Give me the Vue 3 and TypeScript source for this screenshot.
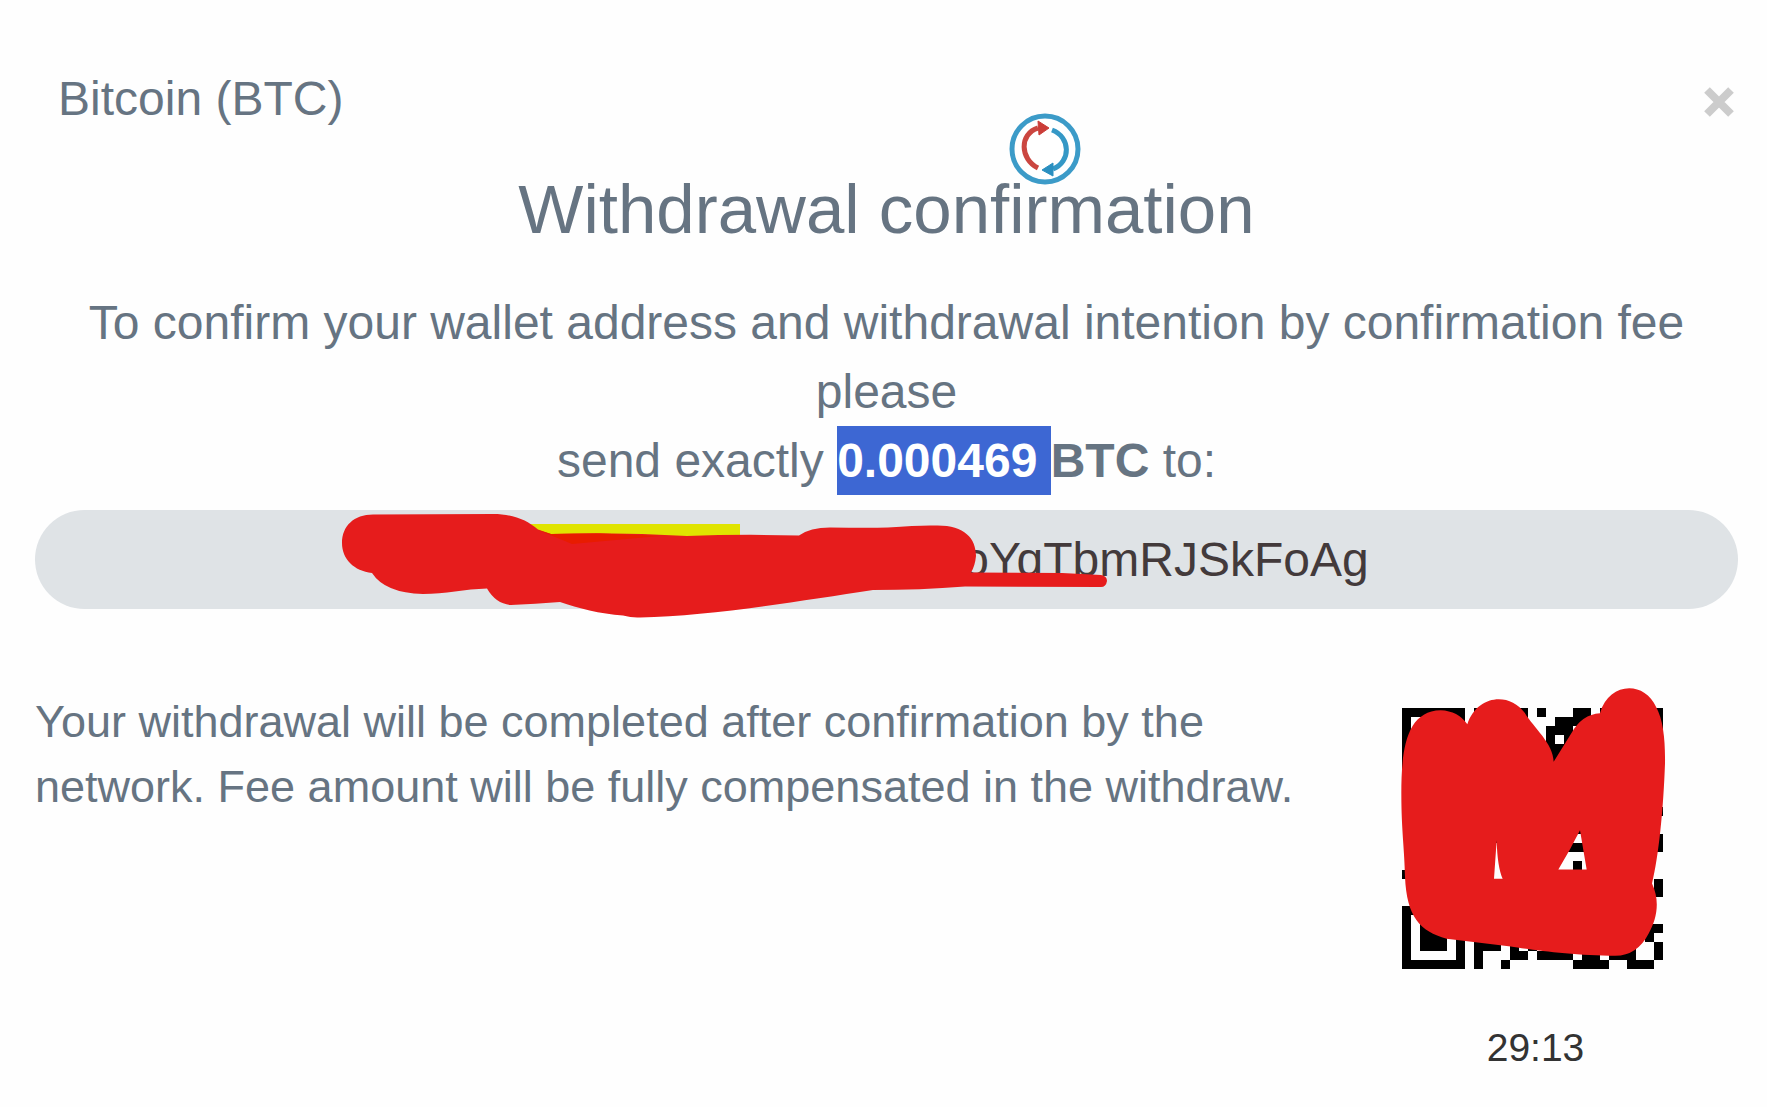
<script setup lang="ts">
const coin = 'Bitcoin (BTC)'
const amount = '0.000469 '
const address = 'oYqTbmRJSkFoAg'
const timeLeft = '29:13'

// Dark modules of the 29x29 code: [column, row, width, height]
const modules: number[][] = [
  [0, 0, 7, 1], [0, 1, 1, 6], [6, 1, 1, 6], [0, 6, 7, 1], [2, 2, 3, 3],
  [8, 0, 6, 3], [15, 0, 1, 1], [19, 0, 2, 1], [17, 1, 4, 1], [16, 2, 3, 1],
  [16, 3, 1, 1], [18, 3, 3, 1], [15, 4, 5, 2],
  [22, 0, 7, 1], [28, 1, 1, 6],
  [28, 11, 1, 1], [28, 14, 1, 2], [10, 14, 1, 1],
  [19, 13, 1, 1], [18, 15, 3, 1], [19, 17, 1, 1], [0, 18, 1, 1], [28, 19, 1, 2],
  [0, 22, 7, 1], [0, 23, 1, 5], [6, 23, 1, 5], [0, 28, 7, 1], [2, 24, 3, 3],
  [8, 26, 3, 1], [8, 27, 1, 2], [11, 28, 1, 1], [12, 26, 1, 2], [13, 27, 1, 1],
  [14, 26, 1, 1], [15, 27, 4, 1], [20, 27, 2, 1], [19, 28, 4, 1], [23, 27, 3, 1],
  [25, 26, 1, 1], [25, 28, 3, 1], [28, 26, 1, 2], [27, 24, 2, 1], [27, 25, 1, 1],
]
</script>

<template>
  <main class="dialog">
    <header class="top">
      <span class="coin">{{ coin }}</span>
      <button class="close" type="button" aria-label="Close">
        <svg viewBox="0 0 30 30" width="30" height="30"><path d="M3 3 27 27M27 3 3 27" stroke="#ccc" stroke-width="8" /></svg>
      </button>
    </header>

    <div class="title-row">
      <h1>Withdrawal confirmation</h1>
      <svg class="refresh" viewBox="0 0 72 72" width="72" height="72" aria-hidden="true">
        <circle cx="36" cy="36" r="33" fill="#fff" stroke="#3c9bc8" stroke-width="5" />
        <path d="M29 55C11 46 10 21 29 15" fill="none" stroke="#cb4640" stroke-width="5" />
        <path d="M29 8 40 15 30 22Z" fill="#cb3d38" stroke="#cb3d38" />
        <path d="M43 17C62 24 62 49 44 56" fill="none" stroke="#3598c6" stroke-width="5" />
        <path d="M44 50 33 57 44 63Z" fill="#2a8fc0" stroke="#2a8fc0" />
      </svg>
    </div>

    <p class="lead">
      To confirm your wallet address and withdrawal intention by confirmation fee please<br />
      send exactly <b><span class="picked">{{ amount }}</span>BTC</b> to:
    </p>

    <div class="address">
      <span>{{ address }}</span>
      <svg class="scribble" viewBox="340 510 770 110" width="770" height="110" aria-hidden="true">
        <path d="M530 524H740V545H530Z" fill="#e0e400" />
        <path d="M342 543C342 526 354 514.500 373 514.500L493 514C513 514 527 520 538 529.500L551 534Q620 532 687 536Q742 534 799 535.500Q810 527.500 830 527.500Q870 528 888 527.500Q920 525 936 525.500C964 525 976 538 976 556Q975 566 971 572.500L1062 573 1101 575Q1107 576 1107 581 1106 587 1101 587L965 586.500Q920 590 873 590C800 601 710 616 640 617.500Q632 618 623 615.500C600 614 578 608 560 602Q535 604 511 605 496 604 487 588.500C465 589 445 594 423 594Q385 593 372 573C354 571 342 559 342 543Z" fill="#e61c1c" />
        <path d="M538 530 572 544 660 536 600 533.500 551 534Z" fill="#e81c00" />
      </svg>
    </div>

    <div class="details">
      <p class="note">Your withdrawal will be completed after confirmation by the network. Fee amount will be fully compensated in the withdraw.</p>
      <div class="side">
        <div class="code">
          <svg viewBox="0 0 29 29" width="261" height="261" role="img" aria-label="QR code" shape-rendering="crispEdges">
            <rect v-for="(m, i) in modules" :key="i" :x="m[0]" :y="m[1]" :width="m[2]" :height="m[3]" />
          </svg>
          <svg class="cover" viewBox="60 54 798 806" width="266" height="269" aria-hidden="true">
            <path fill-rule="evenodd" fill="#e61c1c" d="M64 370C64 240 78 122 182 120Q234 122 262 162C292 72 390 66 434 128C462 174 520 220 521 275L574 189Q606 132 660 129C686 36 792 30 828 110C850 150 856 210 855 280C850 420 836 560 816 640C840 690 832 745 806 790Q772 856 706 857C580 856 450 838 392 829L200 806C120 784 80 740 75 620C74 540 64 480 64 370ZM350 510 342 626H368Q352 590 350 510ZM600 480Q570 540 535 598H620Q610 540 600 480Z" />
          </svg>
        </div>
        <time class="timer">{{ timeLeft }}</time>
      </div>
    </div>
  </main>
</template>

<style>
body {
  margin: 0;
  background: #fefefe;
}
</style>

<style scoped>
.dialog {
  box-sizing: border-box;
  padding: 64px 29px 0 35px;
  color: #667482;
  font: 48px/69px "Liberation Sans", Arial, sans-serif;
}
.top {
  display: flex;
  justify-content: space-between;
  align-items: center;
  padding: 0 4px 0 23px;
}
.close {
  display: flex;
  padding: 0;
  border: 0;
  background: none;
}
.close svg {
  margin-top: 6px;
}
.title-row {
  position: relative;
  margin-top: 39px;
}
h1 {
  margin: 0;
  text-align: center;
  font-size: 69px;
  font-weight: 400;
  line-height: 75px;
}
.refresh {
  position: absolute;
  left: calc(50% + 122px);
  top: -59px;
}
.lead {
  margin: 41px 0 0;
  text-align: center;
}
.picked {
  display: inline-block;
  white-space: pre;
  background: #3d67d3;
  color: #fff;
}
.address {
  position: relative;
  display: flex;
  justify-content: center;
  margin-top: 15px;
  padding: 15px 0;
  border-radius: 50px;
  background: #dfe3e6;
  color: #433a3b;
}
.address span {
  padding-left: 558px;
}
.scribble {
  position: absolute;
  left: calc(50% - 547px);
  top: 0;
}
.details {
  display: flex;
  justify-content: space-between;
  margin-top: 80px;
}
.note {
  flex: 1;
  max-width: 1280px;
  margin: 0;
  font-size: 45px;
  line-height: 65px;
}
.side {
  display: flex;
  flex-direction: column;
  align-items: center;
  padding: 19px 75px 0 0;
}
.code {
  position: relative;
  display: flex;
}
.cover {
  position: absolute;
  left: -2px;
  top: -20px;
}
.timer {
  margin-top: 44px;
  padding-left: 6px;
  color: #333;
  font-size: 39px;
}
</style>
